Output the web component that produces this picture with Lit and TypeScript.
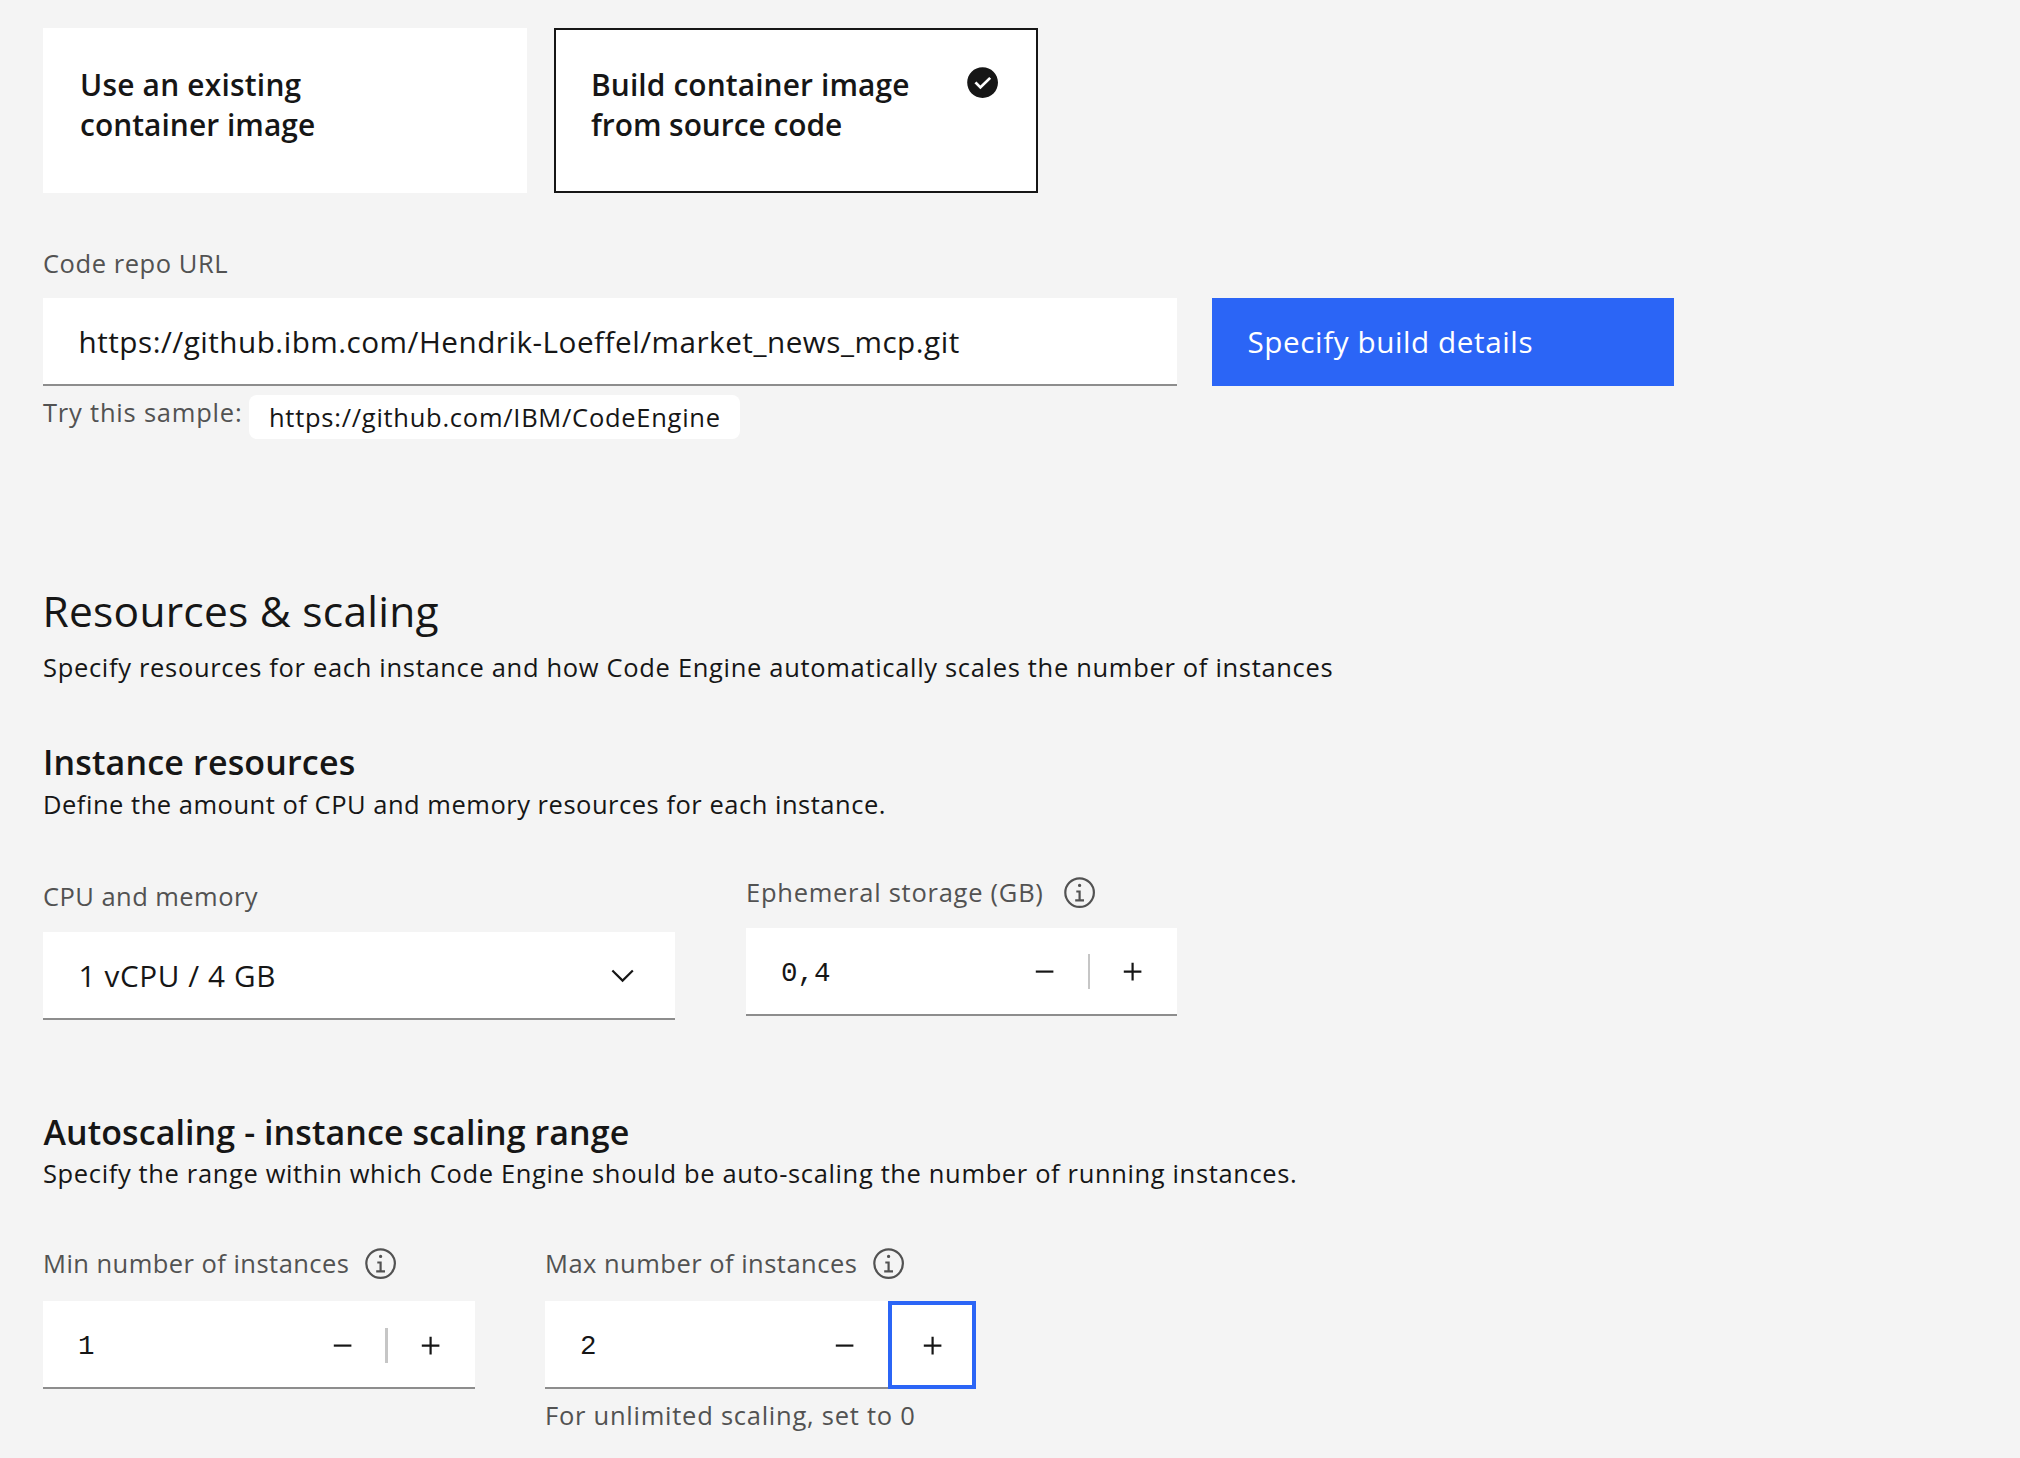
import { LitElement, html, css, svg, nothing } from "lit";
import { customElement, property } from "lit/decorators.js";

const shared = css`
  * {
    box-sizing: border-box;
  }
  .icon {
    display: block;
    width: 35.2px;
    height: 35.2px;
    flex: none;
    fill: currentColor;
  }
  .label {
    display: flex;
    align-items: center;
    height: 34px;
    font-size: 25.5px;
    line-height: 34px;
    color: #525252;
    white-space: nowrap;
  }
  .label .icon {
    margin-top: 2px;
  }
`;

const infoIcon = html`<svg class="icon" viewBox="0 0 32 32">
  ${svg`<path d="M17 22v-8h-4v2h2v6h-3v2h8v-2zM16 8a1.5 1.5 0 1 0 1.5 1.5A1.5 1.5 0 0 0 16 8z"/>
  <path d="M16 30A14 14 0 1 1 30 16 14 14 0 0 1 16 30ZM16 4A12 12 0 1 0 28 16 12 12 0 0 0 16 4Z"/>`}
</svg>`;

@customElement("option-tile")
class OptionTile extends LitElement {
  @property({ type: Boolean, reflect: true }) selected = false;

  static styles = [
    shared,
    css`
      :host {
        display: block;
      }
      .tile {
        display: flex;
        justify-content: space-between;
        width: 484px;
        height: 165px;
        padding: 35px 36px 0 35px;
        border: 2px solid #ffffff;
        background: #ffffff;
        color: #161616;
      }
      :host([selected]) .tile {
        border-color: #161616;
      }
      .title {
        font-size: 29.9px;
        line-height: 40px;
        font-weight: 600;
        white-space: nowrap;
      }
    `,
  ];

  render() {
    return html`<div class="tile">
      <div class="title"><slot></slot></div>
      ${this.selected
        ? html`<svg class="icon" viewBox="0 0 16 16">
            <path
              d="M8 1C4.1 1 1 4.1 1 8s3.1 7 7 7 7-3.1 7-7-3.1-7-7-7zM7 11L4.3 8.3l.9-.8L7 9.3l4-3.9.9.8L7 11z"
            />
          </svg>`
        : nothing}
    </div>`;
  }
}

@customElement("number-field")
class NumberField extends LitElement {
  @property() value = "";
  @property({ type: Boolean, reflect: true }) low = false;
  @property({ type: Boolean, reflect: true }) focused = false;

  static styles = [
    shared,
    css`
      :host {
        display: block;
      }
      .field {
        display: flex;
        height: 88px;
        border-bottom: 2px solid #8d8d8d;
        background: #ffffff;
        color: #161616;
      }
      .value {
        flex: 1;
        padding: 4.8px 0 0 35px;
        font-family: "Liberation Mono", monospace;
        font-size: 27.5px;
        line-height: 81px;
      }
      .step {
        display: flex;
        align-items: center;
        justify-content: center;
        width: 88px;
        height: 88px;
      }
      :host([low]) .step {
        padding-top: 1px;
      }
      :host([focused]) .step {
        padding-left: 1.6px;
      }
      :host([focused]) .increase {
        border: 4px solid #2b65f6;
      }
      .divider {
        width: 2px;
        height: 35px;
        margin: 26px -1px 0;
        background: #c6c6c6;
      }
      :host([low]) .divider {
        width: 3px;
        margin: 27px -1px 0 -2px;
      }
    `,
  ];

  render() {
    return html`<div class="field">
      <div class="value">${this.value}</div>
      <div class="step">
        <svg class="icon" viewBox="0 0 32 32"><path d="M8 15H24V17H8z" /></svg>
      </div>
      ${this.focused ? nothing : html`<div class="divider"></div>`}
      <div class="step increase">
        <svg class="icon" viewBox="0 0 32 32">
          <path d="M17 15V8H15V15H8V17H15V24H17V17H24V15z" />
        </svg>
      </div>
    </div>`;
  }
}

@customElement("app-root")
class AppRoot extends LitElement {
  static styles = [
    shared,
    css`
      :host {
        display: block;
        font-family: "Open Sans", "Noto Sans", sans-serif;
      }
      .page {
        height: 1458px;
        padding: 28px 43px 0;
        overflow: hidden;
        background: #f4f4f4;
        color: #161616;
      }
      .tiles {
        display: flex;
        gap: 27px;
      }
      .line {
        display: block;
      }
      .existing-a { letter-spacing: 0.22px; }
      .existing-b { letter-spacing: 0.05px; }
      .build-a { letter-spacing: 0.11px; }
      .build-b { letter-spacing: -0.025px; }

      .repo-label {
        margin-top: 53px;
        letter-spacing: 0.55px;
      }
      .repo-row {
        display: flex;
        gap: 35px;
        margin-top: 18px;
      }
      .box {
        display: flex;
        align-items: center;
        justify-content: space-between;
        height: 88px;
        padding: 0 34.5px 0 35.5px;
        border-bottom: 2px solid #8d8d8d;
        background: #ffffff;
        font-size: 29.7px;
        white-space: nowrap;
      }
      .repo-input {
        width: 1134px;
        letter-spacing: 0.489px;
      }
      .button {
        display: flex;
        align-items: center;
        width: 462px;
        height: 88px;
        padding: 0 0 1px 35.5px;
        background: #2b65f6;
        color: #ffffff;
        font-size: 29.7px;
        letter-spacing: 0.57px;
      }
      .sample {
        display: flex;
        margin-top: 9px;
      }
      .sample-label {
        width: 206px;
        letter-spacing: 0.788px;
      }
      .tag {
        width: 491px;
        height: 44px;
        padding-left: 20px;
        border-radius: 8px;
        background: #ffffff;
        font-size: 25.5px;
        line-height: 44px;
        letter-spacing: 0.73px;
        white-space: nowrap;
      }

      .section {
        margin: 144px 0 0 -0.5px;
        font-size: 42.5px;
        line-height: 56px;
        font-weight: 400;
        letter-spacing: 0.25px;
      }
      .subsection {
        margin: 56px 0 0 0;
        font-size: 34px;
        line-height: 44px;
        font-weight: 600;
        letter-spacing: 0.16px;
      }
      .autoscaling {
        margin: 90px 0 0 0.5px;
        letter-spacing: 0.08px;
      }
      .copy {
        margin: 0;
        font-size: 25.5px;
        line-height: 34px;
        white-space: nowrap;
      }
      .section-copy {
        margin-top: 11px;
        letter-spacing: 0.678px;
      }
      .instance-copy {
        margin-top: 3px;
        letter-spacing: 0.515px;
      }
      .scaling-copy {
        margin-top: 2px;
        letter-spacing: 0.635px;
      }

      .resources {
        display: flex;
        gap: 71px;
        margin-top: 54px;
      }
      .cpu {
        width: 632px;
        padding-top: 4px;
      }
      .storage {
        width: 431px;
      }
      .resources .label {
        margin-bottom: 19px;
      }
      .cpu-label { letter-spacing: 0.454px; }
      .cpu-value { letter-spacing: 0.62px; }
      .storage-label {
        gap: 18px;
        letter-spacing: 0.74px;
      }
      .chevron {
        margin-top: 2px;
      }

      .range {
        display: flex;
        gap: 70px;
        margin-top: 56px;
      }
      .range .top {
        gap: 14px;
        margin-bottom: 21px;
      }
      .min { width: 432px; }
      .max { width: 431px; }
      .min-label { letter-spacing: 0.46px; }
      .max-label { letter-spacing: 0.48px; }
      .help {
        margin-top: 9px;
        letter-spacing: 0.75px;
      }
    `,
  ];

  render() {
    return html`<main class="page">
      <div class="tiles">
        <option-tile>
          <span class="line existing-a">Use an existing</span>
          <span class="line existing-b">container image</span>
        </option-tile>
        <option-tile selected>
          <span class="line build-a">Build container image</span>
          <span class="line build-b">from source code</span>
        </option-tile>
      </div>

      <div class="label repo-label">Code repo URL</div>
      <div class="repo-row">
        <div class="box repo-input">
          https://github.ibm.com/Hendrik-Loeffel/market_news_mcp.git
        </div>
        <div class="button">Specify build details</div>
      </div>
      <div class="sample">
        <div class="label sample-label">Try this sample:</div>
        <div class="tag">https://github.com/IBM/CodeEngine</div>
      </div>

      <h2 class="section">Resources &amp; scaling</h2>
      <p class="copy section-copy">
        Specify resources for each instance and how Code Engine automatically scales the number of instances
      </p>

      <h3 class="subsection">Instance resources</h3>
      <p class="copy instance-copy">
        Define the amount of CPU and memory resources for each instance.
      </p>
      <div class="resources">
        <div class="cpu">
          <div class="label cpu-label">CPU and memory</div>
          <div class="box cpu-value">
            1 vCPU / 4 GB
            <svg class="icon chevron" viewBox="0 0 16 16">
              <path d="M8 11L3 6 3.7 5.3 8 9.6 12.3 5.3 13 6z" />
            </svg>
          </div>
        </div>
        <div class="storage">
          <div class="label storage-label">
            <span>Ephemeral storage (GB)</span>${infoIcon}
          </div>
          <number-field value="0,4"></number-field>
        </div>
      </div>

      <h3 class="subsection autoscaling">Autoscaling - instance scaling range</h3>
      <p class="copy scaling-copy">
        Specify the range within which Code Engine should be auto-scaling the number of running instances.
      </p>
      <div class="range">
        <div class="min">
          <div class="label top min-label">
            <span>Min number of instances</span>${infoIcon}
          </div>
          <number-field low value="1"></number-field>
        </div>
        <div class="max">
          <div class="label top max-label">
            <span>Max number of instances</span>${infoIcon}
          </div>
          <number-field low focused value="2"></number-field>
          <div class="label help">For unlimited scaling, set to 0</div>
        </div>
      </div>
    </main>`;
  }
}
